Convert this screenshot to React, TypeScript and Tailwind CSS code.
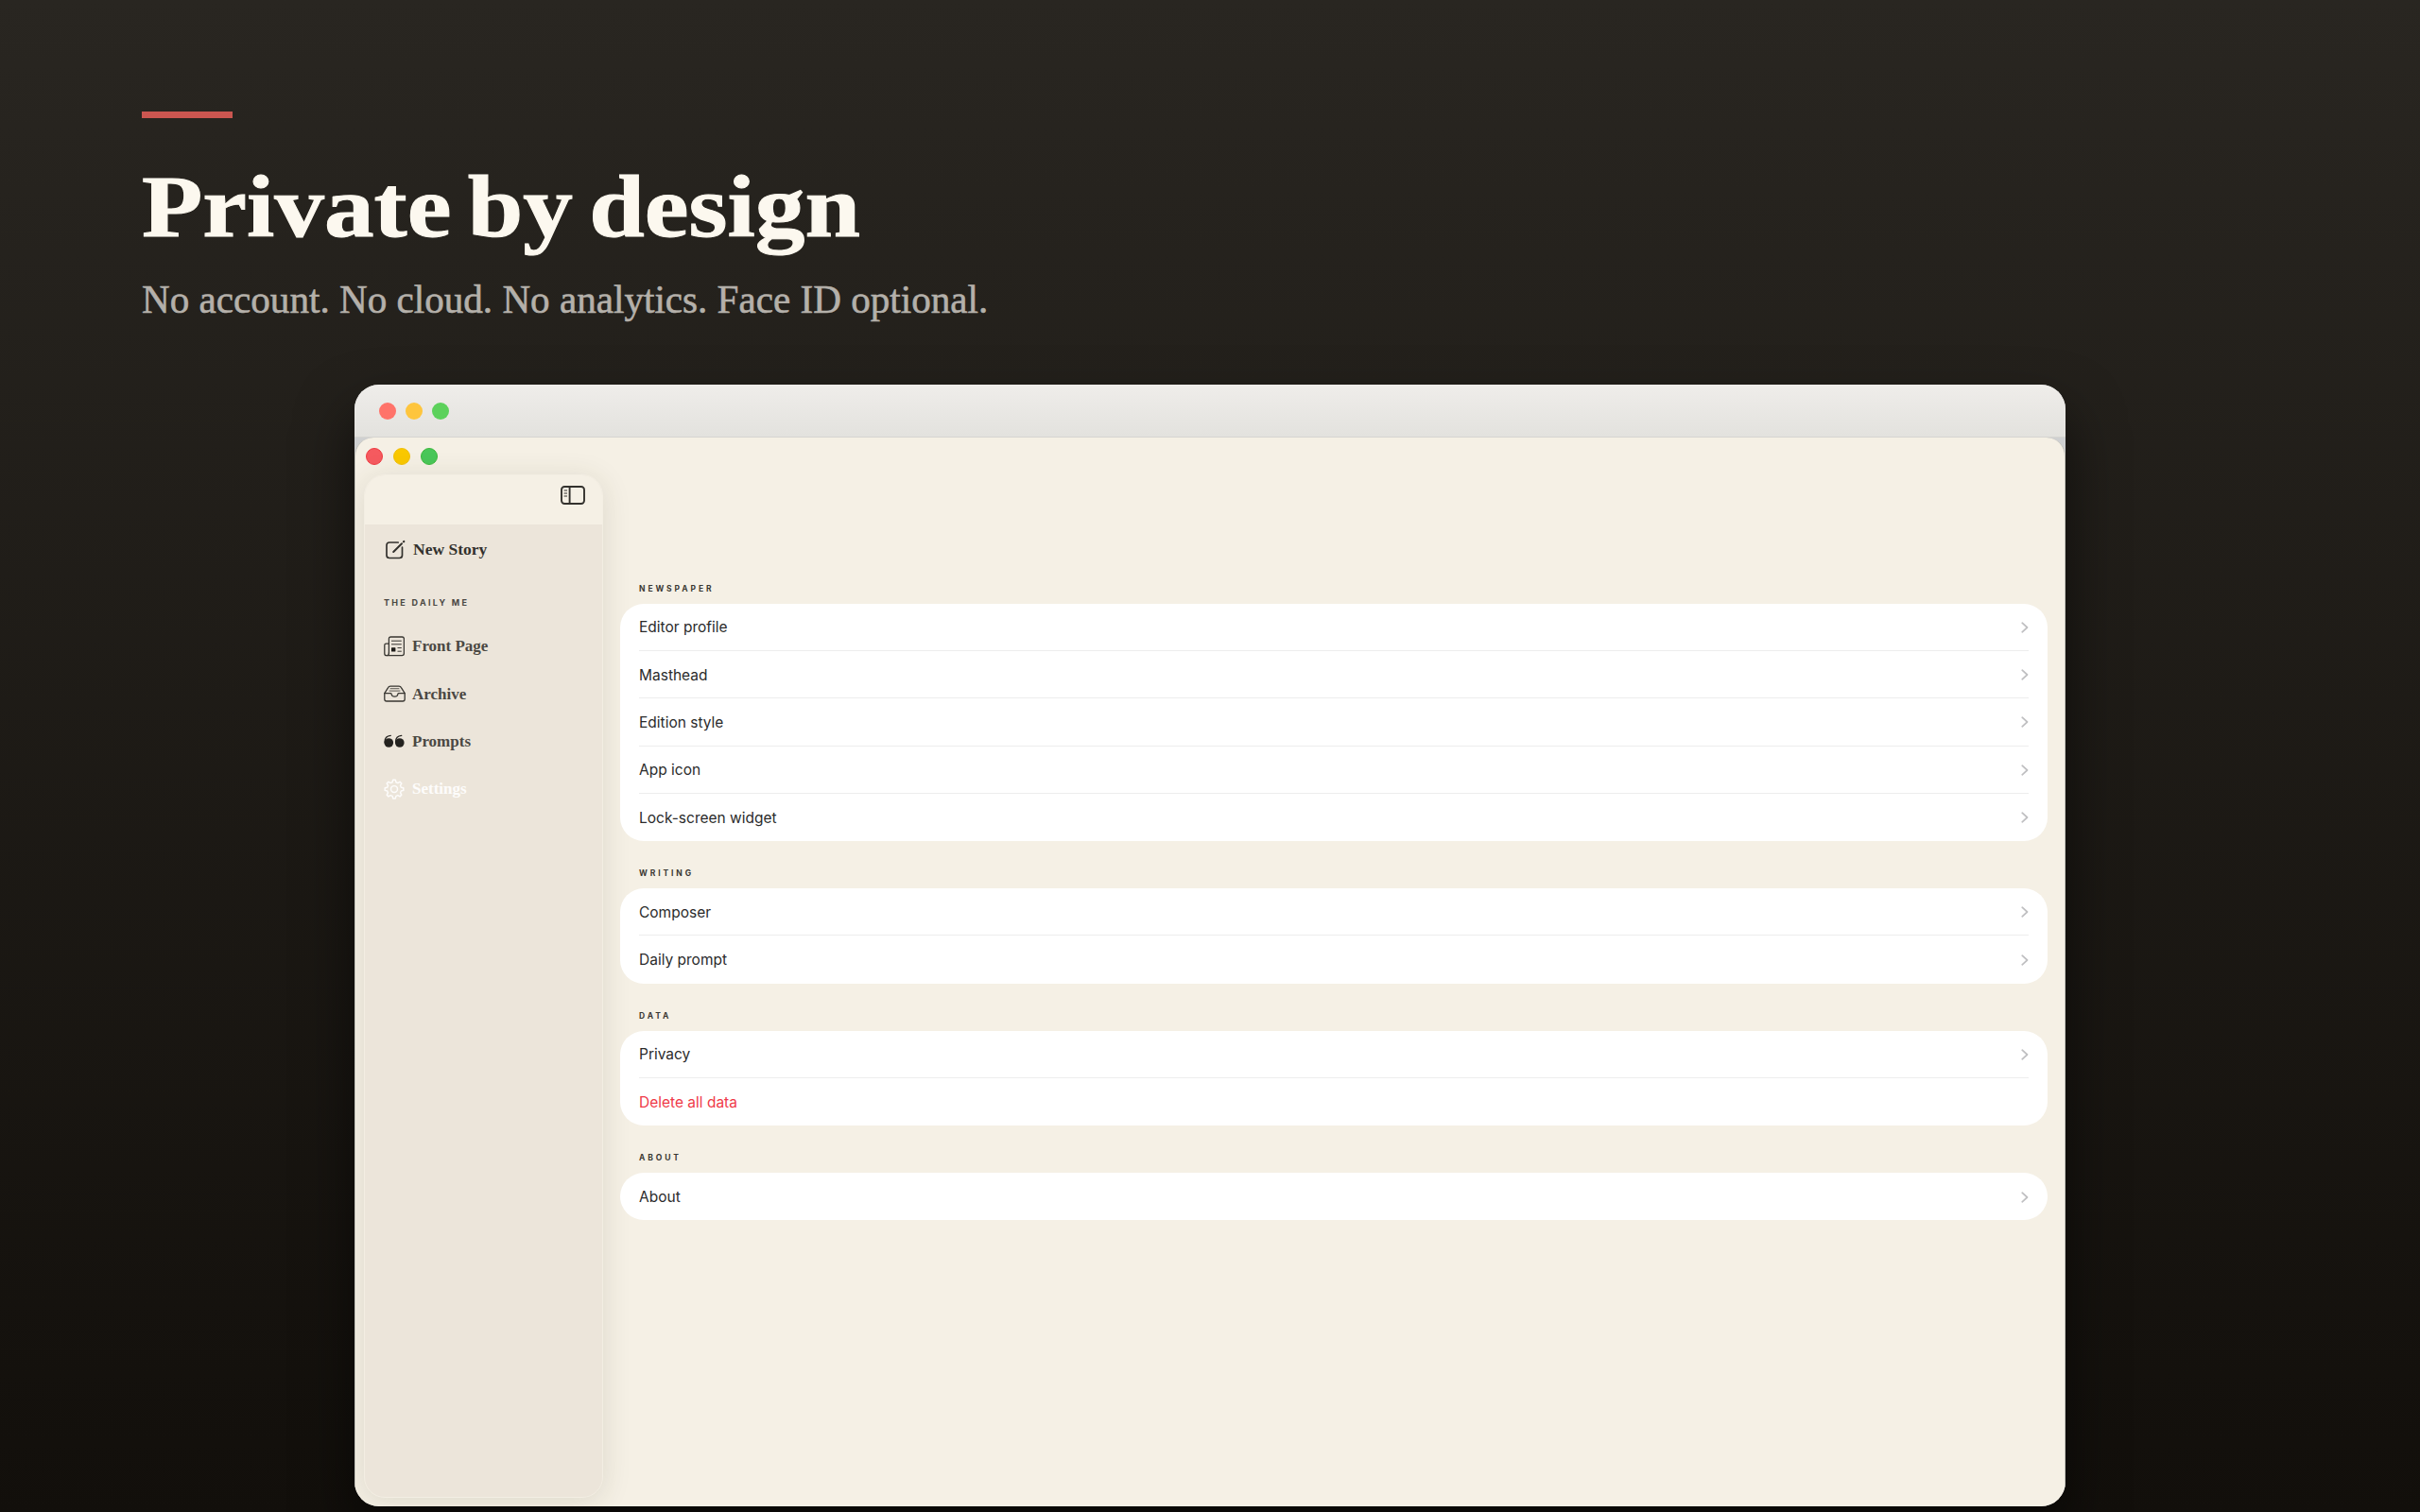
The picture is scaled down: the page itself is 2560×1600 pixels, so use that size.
import { type ReactNode } from "react";

const NAV_ITEMS: { label: string; icon: ReactNode; className: string }[] = [
  { label: "Front Page", icon: <NewspaperIcon />, className: "text-[#4b4843]" },
  { label: "Archive", icon: <TrayIcon />, className: "text-[#4b4843]" },
  { label: "Prompts", icon: <QuoteIcon />, className: "text-[#4b4843]" },
  { label: "Settings", icon: <GearIcon />, className: "text-white/90" },
];

const SECTIONS: { title: string; rows: { label: string; danger?: boolean }[] }[] = [
  {
    title: "Newspaper",
    rows: [
      { label: "Editor profile" },
      { label: "Masthead" },
      { label: "Edition style" },
      { label: "App icon" },
      { label: "Lock-screen widget" },
    ],
  },
  { title: "Writing", rows: [{ label: "Composer" }, { label: "Daily prompt" }] },
  { title: "Data", rows: [{ label: "Privacy" }, { label: "Delete all data", danger: true }] },
  { title: "About", rows: [{ label: "About" }] },
];

function SidebarIcon() {
  return (
    <svg className="h-[20px] w-[26px]" viewBox="0 0 26 20" fill="none" stroke="#33312d" strokeWidth="1.9">
      <rect x="1" y="1" width="24" height="18" rx="3.2" />
      <path d="M9.6 1v18" />
      <path d="M3.6 5h3.4M3.6 8h3.4M3.6 11h3.4" strokeWidth="1" />
    </svg>
  );
}

function ComposeIcon() {
  return (
    <svg className="h-[22px] w-[22px]" viewBox="0 0 22 22" fill="none" stroke="#33312d" strokeWidth="1.7" strokeLinecap="round">
      <path d="M14.2 3H5Q2 3 2 6v10.5q0 3 3 3h10.5q3 0 3-3V8.2" />
      <path d="M9.2 13 18 4.3" strokeWidth="2" />
      <path d="m20 2.3.3-.3" strokeWidth="2.2" />
    </svg>
  );
}

function NewspaperIcon() {
  return (
    <svg className="h-[22px] w-[22px]" viewBox="0 0 22 22" fill="none" stroke="#383631" strokeWidth="1.3" strokeLinecap="round">
      <path d="M5.4 18V3q0-2 2-2h12q2 0 2 2v15.6q0 2-2 2H3Q.8 20.6.8 18.4V9.8q0-1.6 1.6-1.6h3" />
      <path d="M5.4 18q0 2.6-2 2.6" />
      <path d="M8.4 5.2h10M8.4 8.8h10" strokeWidth="1" />
      <path d="M14.9 12.6h3.5M14.9 16.2h3.5" strokeWidth="1" />
      <rect x="8" y="12.2" width="4.4" height="4.4" rx=".6" fill="#1d1b18" stroke="none" />
    </svg>
  );
}

function TrayIcon() {
  return (
    <svg className="h-[22px] w-[23px]" viewBox="0 0 23 22" fill="none" stroke="#383631" strokeWidth="1.3" strokeLinejoin="round" strokeLinecap="round">
      <path d="M.8 10.6 4.6 4.6Q5.3 3.2 7 3.2h9q1.7 0 2.4 1.4l3.8 6v6.2q0 2.2-2.2 2.2H3Q.8 19 .8 16.8Z" />
      <path d="M.8 10.6h6.4q.8 0 .9.9.5 2.7 3.4 2.7t3.4-2.7q.1-.9.9-.9h6.4" />
      <path d="M7 5.7h9M6 8.1h11" strokeWidth=".8" />
    </svg>
  );
}

function QuoteIcon() {
  return (
    <svg className="h-[22px] w-[22px]" viewBox="0 0 22 22" fill="#24221f">
      <circle cx="5.3" cy="12" r="4.8" />
      <circle cx="16.8" cy="12" r="4.8" />
      <path d="M1.1 12C.7 7.6 3 4.7 7.3 4.3M12.6 12c-.4-4.4 1.9-7.3 6.2-7.7" fill="none" stroke="#24221f" strokeWidth="1.2" strokeLinecap="round" />
    </svg>
  );
}

// Eight-lobed gear with a hub
function GearIcon() {
  return (
    <svg className="h-[22px] w-[22px]" viewBox="0 0 24 24" fill="none" stroke="currentColor" strokeWidth="1.6" strokeLinejoin="round">
      <path d="M10.6 1.4h2.8l.7 2.7 2.1.9 2.4-1.4 1.9 1.9-1.4 2.4.9 2.1 2.7.7v2.8l-2.7.7-.9 2.1 1.4 2.4-1.9 1.9-2.4-1.4-2.1.9-.7 2.7h-2.8l-.7-2.7-2.1-.9-2.4 1.4-1.9-1.9 1.4-2.4-.9-2.1-2.7-.7v-2.8l2.7-.7.9-2.1-1.4-2.4 1.9-1.9 2.4 1.4 2.1-.9Z" />
      <circle cx="12" cy="12.1" r="3.8" />
    </svg>
  );
}

function Chevron() {
  return (
    <svg className="h-[12px] w-[8px]" viewBox="0 0 8 12" fill="none" stroke="#bfbfc1" strokeWidth="1.7" strokeLinecap="round" strokeLinejoin="round">
      <path d="m1.2 1.2 5.3 4.8-5.3 4.8" />
    </svg>
  );
}

function Sidebar() {
  return (
    <aside className="mt-[10px] ml-[9px] h-[1083px] w-[253px] shrink-0 overflow-hidden rounded-[22px] border border-[#f3eee3] bg-[#ece5da] shadow-[0_4px_30px_rgba(60,60,30,0.13)]">
      <div className="flex h-[52px] justify-end bg-[#f5f0e5] pt-[11px] pr-[18px]">
        <SidebarIcon />
      </div>
      <div className="flex h-[53px] items-center gap-[8px] pl-[21px] font-['Liberation_Serif',serif] text-[17.5px] font-bold text-[#33312d]">
        <ComposeIcon />
        <span>New Story</span>
      </div>
      <h2 className="mt-[22px] pl-[20px] font-[Inter,sans-serif] text-[9px] leading-[16px] font-bold tracking-[2.3px] text-[#4b4843] uppercase">
        The Daily Me
      </h2>
      <nav className="mt-[13px]">
        {NAV_ITEMS.map((item) => (
          <a
            key={item.label}
            className={`flex h-[50.3px] items-center pl-[20px] font-['Liberation_Serif',serif] text-[17px] font-bold ${item.className}`}
          >
            <span className="w-[30px]">{item.icon}</span>
            {item.label}
          </a>
        ))}
      </nav>
    </aside>
  );
}

function Settings() {
  return (
    <main className="flex-1 pt-[121px] pr-[18px] pl-[18px] font-[Inter,sans-serif]">
      {SECTIONS.map((section) => (
        <section key={section.title} className="mb-[24.2px]">
          <h3 className="h-[26px] pt-[2px] pl-[20px] text-[8.5px] leading-[16px] font-bold tracking-[2.9px] text-[#3a3833] uppercase">
            {section.title}
          </h3>
          <ul className="rounded-[25px] bg-white px-[20px]">
            {section.rows.map((row) => (
              <li
                key={row.label}
                className={`flex h-[50.2px] items-center justify-between border-b border-[#ededed] pt-px text-[15.5px] last:border-b-0 ${
                  row.danger ? "text-[#ef3a48]" : "text-[#2b2b2b]"
                }`}
              >
                {row.label}
                {!row.danger && <Chevron />}
              </li>
            ))}
          </ul>
        </section>
      ))}
    </main>
  );
}

export default function App() {
  return (
    <div className="h-[1600px] w-[2560px] overflow-hidden bg-linear-to-b from-[#292621] to-[#120f0b]">
      <header className="h-[407px] pt-[118px] pl-[150px] font-['Liberation_Serif',serif]">
        <div className="h-[7px] w-[96px] bg-[#cb5650]" />
        <h1 className="mt-[41px] origin-left scale-x-[1.12] text-[94px] leading-[104px] font-bold [word-spacing:-8px] whitespace-nowrap text-[#fcf8ef] [-webkit-text-stroke:1px_#fcf8ef]">
          Private by design
        </h1>
        <p className="mt-[22px] origin-left scale-x-[0.979] text-[42px] leading-[50px] whitespace-nowrap text-[#b4b0aa] [-webkit-text-stroke:0.6px_#b4b0aa]">
          No account. No cloud. No analytics. Face ID optional.
        </p>
      </header>

      <div className="mx-auto h-[1187px] w-[1810px] overflow-hidden rounded-[26px] bg-[#cfd0d1] shadow-[0_30px_60px_rgba(0,0,0,0.55)]">
        <div className="flex h-[56px] items-center gap-[10px] border-b border-[#d6d5d1] bg-linear-to-b from-[#efedea] to-[#e3e2de] pl-[26px]">
          <span className="size-[18px] rounded-full bg-[#ff736a]" />
          <span className="size-[18px] rounded-full bg-[#fec53d]" />
          <span className="size-[18px] rounded-full bg-[#5cd15b]" />
        </div>
        <div className="h-[1131px] overflow-hidden rounded-t-[20px] border-x border-[#c4c3bb] bg-[#f5f0e5]">
          <div className="flex h-[29px] items-end gap-[11px] pl-[10.5px]">
            <span className="size-[18px] rounded-full border border-[#ee3b41] bg-[#f55a5f]" />
            <span className="size-[18px] rounded-full border border-[#efbf0a] bg-[#fac800]" />
            <span className="size-[18px] rounded-full border border-[#3cb83c] bg-[#49c759]" />
          </div>
          <div className="flex">
            <Sidebar />
            <Settings />
          </div>
        </div>
      </div>
    </div>
  );
}
